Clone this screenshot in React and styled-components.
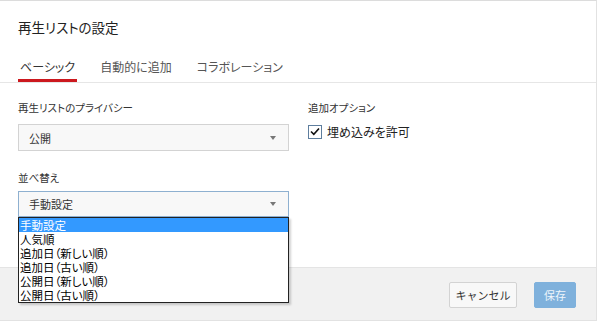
import React from 'react';
import styled, { createGlobalStyle } from 'styled-components';

const GlobalStyle = createGlobalStyle`
  html, body {
    margin: 0;
    padding: 0;
    background: #fff;
  }
  body {
    font-family: "Noto Sans CJK JP", "Noto Sans", sans-serif;
    font-feature-settings: "palt";
    color: #333;
  }
`;

const Dialog = styled.div`
  width: 596px;
  height: 319px;
  border-top: 1px solid #dcdcdc;
  border-right: 1px solid #e2e2e2;
  border-bottom: 1px solid #e2e2e2;
  display: flex;
  flex-direction: column;
`;

const Header = styled.div`
  padding: 17px 18px 0;
  border-bottom: 1px solid #e6e6e6;
`;

const Title = styled.h1`
  margin: 0;
  font-size: 13.5px;
  line-height: 18px;
  font-weight: normal;
  color: #222;
`;

const Tabs = styled.div`
  display: flex;
  gap: 21px;
  margin-top: 23px;
`;

const Tab = styled.div`
  padding: 0 2px 4px;
  font-size: 12px;
  line-height: 16px;
  color: ${(p) => (p.$active ? '#333' : '#555')};
  border-bottom: 3px solid ${(p) => (p.$active ? '#cc181e' : 'transparent')};
`;

const Body = styled.div`
  flex: 1;
  display: grid;
  grid-template-columns: 271px 1fr;
  column-gap: 19px;
  padding: 18px 18px 0;
`;

const Column = styled.div`
  display: flex;
  flex-direction: column;
`;

const Label = styled.div`
  font-size: 10.5px;
  line-height: 14px;
  color: #333;
  margin-bottom: ${(p) => p.$mb || 9}px;
`;

const SelectWrap = styled.div`
  position: relative;
  margin-bottom: ${(p) => p.$mb || 0}px;
`;

const SelectBox = styled.div`
  height: ${(p) => p.$h}px;
  box-sizing: border-box;
  display: flex;
  align-items: center;
  justify-content: space-between;
  padding: 0 12px 0 10px;
  background: #f8f8f8;
  border: 1px solid ${(p) => (p.$focused ? '#8eb0d0' : '#d3d3d3')};
  font-size: 11px;
  color: #333;
`;

const Arrow = styled.span`
  width: 0;
  height: 0;
  border-left: 3.5px solid transparent;
  border-right: 3.5px solid transparent;
  border-top: 4px solid #777;
`;

const OptionList = styled.ul`
  position: absolute;
  top: 100%;
  left: 0;
  right: 0;
  margin: 0;
  padding: 0;
  list-style: none;
  background: #fff;
  border: 1px solid #222;
  box-shadow: 2px 2px 2px rgba(0, 0, 0, 0.18);
  z-index: 5;
`;

const Option = styled.li`
  height: 14px;
  line-height: 14px;
  font-size: 11.5px;
  padding-left: 1px;
  overflow: hidden;
  color: ${(p) => (p.$selected ? '#fff' : '#000')};
  background: ${(p) => (p.$selected ? '#3399ff' : 'transparent')};
`;

const CheckRow = styled.label`
  display: flex;
  align-items: center;
  gap: 5px;
  font-size: 12px;
  color: #222;
  margin-top: -1px;
`;

const CheckBox = styled.span`
  width: 14px;
  height: 14px;
  box-sizing: border-box;
  border: 1px solid #5e7e9e;
  background: #fff;
  display: flex;
  align-items: center;
  justify-content: center;
`;

const Footer = styled.div`
  height: 53px;
  box-sizing: border-box;
  background: #f1f1f1;
  border-top: 1px solid #e4e4e4;
  display: flex;
  justify-content: flex-end;
  align-items: flex-start;
  gap: 17px;
  padding: 14px 20px 0;
`;

const Button = styled.button`
  width: ${(p) => p.$w}px;
  height: 26px;
  box-sizing: border-box;
  padding: 0;
  font-family: inherit;
  font-size: 11px;
  border-radius: 2px;
  border: 1px solid ${(p) => (p.$primary ? '#7fb1dc' : '#d3d3d3')};
  background: ${(p) => (p.$primary ? '#7fb1dc' : '#f8f8f8')};
  color: ${(p) => (p.$primary ? '#eef5fb' : '#333')};
`;

const sortOptions = [
  '手動設定',
  '人気順',
  '追加日（新しい順）',
  '追加日（古い順）',
  '公開日（新しい順）',
  '公開日（古い順）',
];

export default function App() {
  return (
    <>
      <GlobalStyle />
      <Dialog>
        <Header>
          <Title>再生リストの設定</Title>
          <Tabs>
            <Tab $active>ベーシック</Tab>
            <Tab>自動的に追加</Tab>
            <Tab>コラボレーション</Tab>
          </Tabs>
        </Header>
        <Body>
          <Column>
            <Label>再生リストのプライバシー</Label>
            <SelectWrap $mb={20}>
              <SelectBox $h={27}>
                公開
                <Arrow />
              </SelectBox>
            </SelectWrap>
            <Label $mb={6}>並べ替え</Label>
            <SelectWrap>
              <SelectBox $h={26} $focused>
                手動設定
                <Arrow />
              </SelectBox>
              <OptionList>
                {sortOptions.map((o, i) => (
                  <Option key={o} $selected={i === 0}>
                    {o}
                  </Option>
                ))}
              </OptionList>
            </SelectWrap>
          </Column>
          <Column>
            <Label $mb={9}>追加オプション</Label>
            <CheckRow>
              <CheckBox>
                <svg width="10" height="9" viewBox="0 0 10 9">
                  <path d="M1 4.5 L3.8 7.3 L9 1.5" fill="none" stroke="#111" strokeWidth="1.6" />
                </svg>
              </CheckBox>
              埋め込みを許可
            </CheckRow>
          </Column>
        </Body>
        <Footer>
          <Button $w={68}>キャンセル</Button>
          <Button $w={42} $primary>保存</Button>
        </Footer>
      </Dialog>
    </>
  );
}
